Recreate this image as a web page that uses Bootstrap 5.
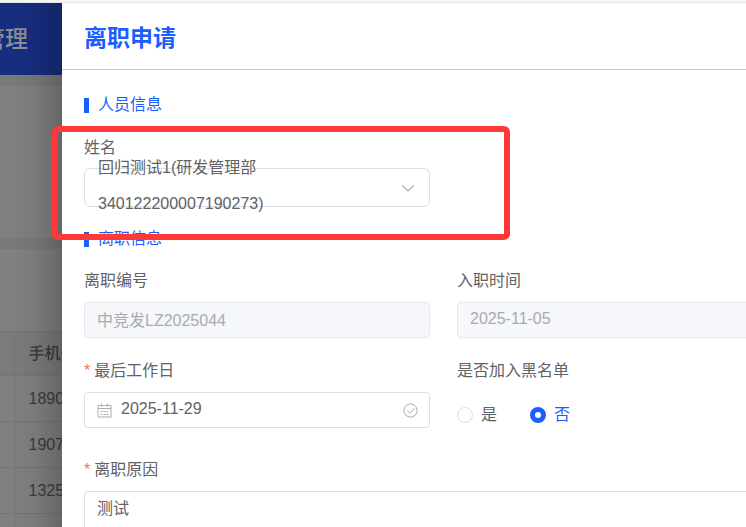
<!DOCTYPE html>
<html lang="zh-CN">
<head>
<meta charset="utf-8">
<meta name="viewport" content="width=device-width, initial-scale=1">
<title>离职申请</title>
<link rel="stylesheet" href="https://cdn.jsdelivr.net/npm/bootstrap@5.3.0/dist/css/bootstrap.min.css">
<style>
:root { --brand: #1a5eff; --ink: #606266; --line: #dcdfe6; --mute: #a8abb2; }
body { font-family: "Liberation Sans", "Noto Sans CJK SC", sans-serif; font-size: 16px; line-height: 24px; color: var(--ink); background: #fff; }
.topline { height: 3px; background: #f5f5f5; border-bottom: 1px solid #e6e6e6; }
.screen { height: 100vh; }
/* dimmed page behind the drawer */
.backpage { width: 62px; background: #808080; color: #3a3b3d; }
.backpage::after { content: ""; position: absolute; inset: 0; background: linear-gradient(to right, transparent 20%, rgba(0,0,0,.06) 60%, rgba(0,0,0,.2)); }
.backbar { height: 72px; padding-right: 34px; background: #172e80; color: #8c8f96; font-size: 23px; font-weight: 500; }
.band { height: 11px; background: #797979; }
.backcard { height: 152px; }
.backtools { height: 82px; }
.backtable { width: 160px; table-layout: fixed; }
.backtable th, .backtable td { height: 46px; padding: 0 0 0 14px; border: 1px solid #737579; border-left: 0; vertical-align: middle; }
.backtable th { height: 44px; background: #7a7b7c; font-weight: 500; }
.backtable .lead-cell { width: 14px; padding: 0; }
/* drawer */
.drawer { min-width: 0; background: #fff; }
.drawer-head { height: 67px; padding: 4px 22px 0; border-bottom: 1px solid #c8c9cc; }
.drawer-head h1 { font-size: 23px; line-height: 32px; font-weight: 700; color: var(--brand); }
.drawer-body { padding: 23px 0 0 22px; margin-right: -57px; }
.section-title { font-size: 16px; line-height: 24px; font-weight: 400; color: var(--brand); gap: 9px; }
.section-title::before { content: ""; width: 5px; height: 15px; background: currentColor; }
.pair { display: grid; grid-template-columns: 1fr 1fr; gap: 21px 27px; }
.form-label { margin: 0 0 9px; line-height: 24px; display: block; }
.form-control, .form-select { font-size: 16px; color: var(--ink); border-color: var(--line); border-radius: 4px; }
.form-control { height: 36px; padding: 0 12px 2px; }
.form-control:disabled { background: #f5f7fa; color: var(--mute); border-color: #e4e7ed; }
.person { padding-top: 3px; }
.person .form-label { margin-bottom: 8px; }
.person .form-select { height: 39px; border-radius: 6px; background-position: right 14px center; background-size: 14px 14px;
  background-image: url("data:image/svg+xml,%3Csvg xmlns='http://www.w3.org/2000/svg' viewBox='0 0 14 14'%3E%3Cpath d='M1.3 4.5 7 10l5.700-5.500' fill='none' stroke='%23a8abb2' stroke-width='1.200'/%3E%3C/svg%3E"); }
.picked { left: 14px; right: 150px; top: -18px; line-height: 36px; pointer-events: none; }
.details { padding-top: 2px; }
.need::before { content: "*"; color: #f56c6c; margin-right: 4px; }
.date-box .form-control { padding: 0 36px 2px; }
.date-box svg { top: 11px; width: 15px; height: 15px; fill: none; stroke: var(--mute); pointer-events: none; }
.date-box .ico-cal { left: 13px; }
.date-box .ico-ok { right: 12px; }
.radios { height: 36px; padding-top: 10px; gap: 33px; }
.form-check-input { width: 16px; height: 16px; margin: 0; border-color: var(--line); }
.form-check-input:checked { border: 5px solid var(--brand); background: #fff; }
.form-check-input:checked + label { color: var(--brand); }
.reason { margin-top: 30px; }
textarea.form-control { height: 80px; padding: 5px 12px; resize: none; }
/* annotation frame */
.frame { left: 52px; top: 126px; width: 458px; height: 114px; border: 6px solid #ff3838; border-radius: 6px; pointer-events: none; }
</style>
<script src="https://cdn.jsdelivr.net/npm/bootstrap@5.3.0/dist/js/bootstrap.bundle.min.js"></script>
</head>
<body>
<div class="screen d-flex flex-column position-relative overflow-hidden">
  <div class="topline flex-shrink-0"></div>
  <div class="d-flex flex-grow-1 overflow-hidden">
    <aside class="backpage position-relative flex-shrink-0 overflow-hidden">
      <div class="backbar d-flex align-items-center justify-content-end text-nowrap">管理</div>
      <div class="band"></div>
      <div class="backcard"></div>
      <div class="band"></div>
      <div class="backtools"></div>
      <table class="backtable">
        <thead><tr><th class="lead-cell"></th><th scope="col">手机号</th></tr></thead>
        <tbody>
          <tr><td class="lead-cell"></td><td>1890</td></tr>
          <tr><td class="lead-cell"></td><td>1907</td></tr>
          <tr><td class="lead-cell"></td><td>1325</td></tr>
          <tr><td class="lead-cell"></td><td></td></tr>
        </tbody>
      </table>
    </aside>
    <main class="drawer flex-grow-1 overflow-hidden">
      <header class="drawer-head d-flex align-items-center"><h1 class="m-0">离职申请</h1></header>
      <form class="drawer-body">
        <h2 class="section-title d-flex align-items-center mb-3">人员信息</h2>
        <div class="pair person">
          <div>
            <label class="form-label" for="person">姓名</label>
            <div class="position-relative">
              <select class="form-select" id="person"><option value="340122200007190273" selected></option></select>
              <div class="picked position-absolute">回归测试1(研发管理部 340122200007190273)</div>
            </div>
          </div>
        </div>
        <h2 class="section-title d-flex align-items-center mt-3 pt-1 mb-3">离职信息</h2>
        <div class="pair details">
          <div>
            <label class="form-label" for="code">离职编号</label>
            <input class="form-control" id="code" type="text" value="中竞发LZ2025044" disabled>
          </div>
          <div>
            <label class="form-label" for="joined">入职时间</label>
            <input class="form-control" id="joined" type="text" value="2025-11-05" disabled>
          </div>
          <div>
            <label class="form-label need" for="lastday">最后工作日</label>
            <div class="date-box position-relative">
              <input class="form-control" id="lastday" type="text" value="2025-11-29">
              <svg class="ico-cal position-absolute" viewBox="0 0 15 15" aria-hidden="true"><path d="M1 2.500h13v11.500H1zM1 5.500h13M4.500.500v3M10.500.500v3M3.500 8.500h2M6.500 8.500h2M9.500 8.500h2M3.500 11.500h2M6.500 11.500h2M9.500 11.500h2"/></svg>
              <svg class="ico-ok position-absolute" viewBox="0 0 15 15" aria-hidden="true"><circle cx="7.500" cy="7.500" r="6.600"/><path d="m4 7.500 2.700 2.700 4.600-4.900"/></svg>
            </div>
          </div>
          <div role="radiogroup" aria-labelledby="blacklist">
            <div class="form-label" id="blacklist">是否加入黑名单</div>
            <div class="radios d-flex align-items-center">
              <div class="d-flex align-items-center gap-2"><input class="form-check-input" type="radio" name="black" id="black-yes"><label for="black-yes">是</label></div>
              <div class="d-flex align-items-center gap-2"><input class="form-check-input" type="radio" name="black" id="black-no" checked><label for="black-no">否</label></div>
            </div>
          </div>
        </div>
        <div class="reason">
          <label class="form-label need" for="reason">离职原因</label>
          <textarea class="form-control" id="reason">测试</textarea>
        </div>
      </form>
    </main>
  </div>
  <div class="frame position-absolute"></div>
</div>
</body>
</html>
